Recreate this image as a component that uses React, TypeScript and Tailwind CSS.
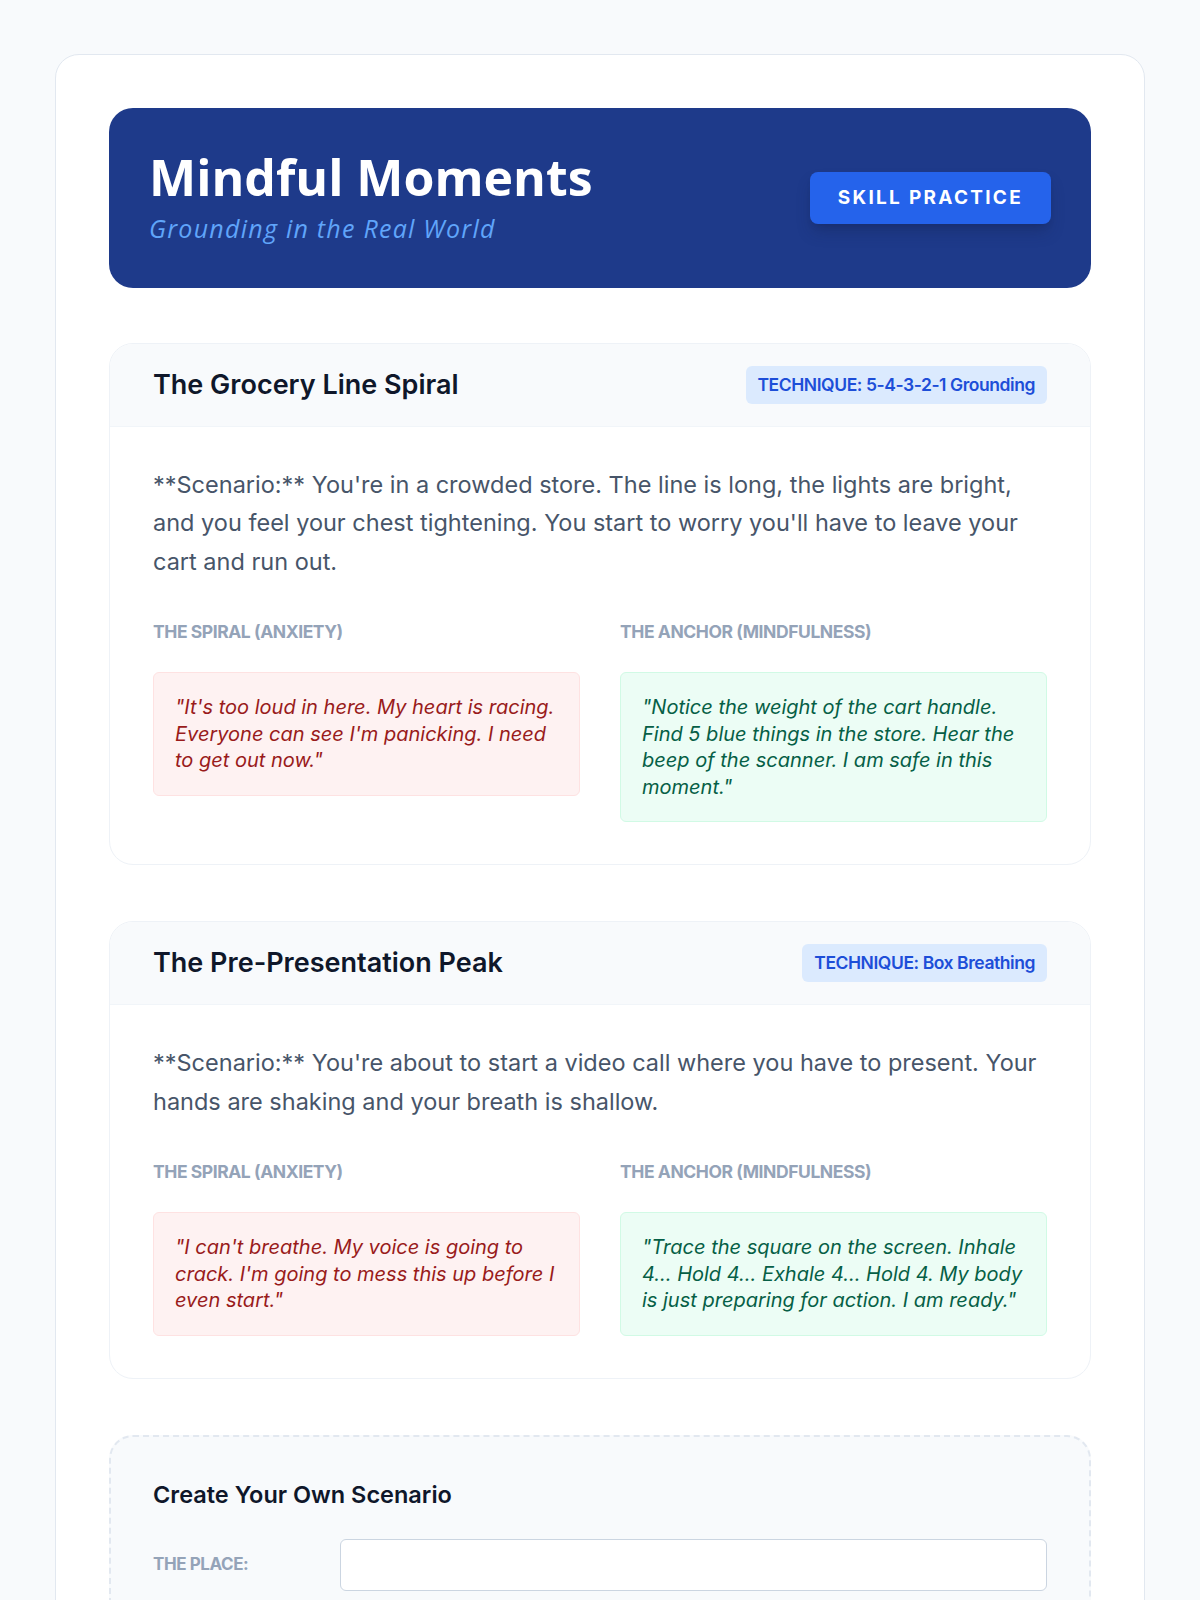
import React from 'react';

type Scenario = {
    title: string;
    technique: string;
    text: string;
    spiral: string;
    anchor: string;
};

const scenarios: Scenario[] = [
    {
        title: 'The Grocery Line Spiral',
        technique: 'TECHNIQUE: 5-4-3-2-1 Grounding',
        text: "**Scenario:** You're in a crowded store. The line is long, the lights are bright, and you feel your chest tightening. You start to worry you'll have to leave your cart and run out.",
        spiral: '"It\'s too loud in here. My heart is racing. Everyone can see I\'m panicking. I need to get out now."',
        anchor: '"Notice the weight of the cart handle. Find 5 blue things in the store. Hear the beep of the scanner. I am safe in this moment."',
    },
    {
        title: 'The Pre-Presentation Peak',
        technique: 'TECHNIQUE: Box Breathing',
        text: "**Scenario:** You're about to start a video call where you have to present. Your hands are shaking and your breath is shallow.",
        spiral: '"I can\'t breathe. My voice is going to crack. I\'m going to mess this up before I even start."',
        anchor: '"Trace the square on the screen. Inhale 4... Hold 4... Exhale 4... Hold 4. My body is just preparing for action. I am ready."',
    },
];

const ScenarioCard = ({ s }: { s: Scenario }) => (
    <div className="rounded-3xl border border-[#eef2f7] bg-white overflow-hidden">
        {/* Card header */}
        <div className="flex items-center justify-between bg-[#f8fafc] border-b border-[#f1f5f9] px-[43px] h-[83px]">
            <h2 className="text-[27px] font-semibold text-[#0f172a]">{s.title}</h2>
            <span className="rounded-md bg-[#dbeafe] px-3 py-[7px] text-[17.5px] leading-6 font-semibold text-[#1d4ed8] tracking-tight">
                {s.technique}
            </span>
        </div>

        {/* Card body */}
        <div className="px-[43px] pt-[39px] pb-[42px]">
            <p className="text-[23.5px] leading-[38.4px] text-[#475569]">{s.text}</p>

            <div className="mt-[39px] grid grid-cols-2 gap-10">
                <div>
                    <p className="text-[17.5px] leading-6 font-bold uppercase text-[#94a3b8] tracking-tight">The Spiral (Anxiety)</p>
                    <div className="mt-7 rounded-md border border-[#fee2e2] bg-[#fef2f2] p-[21px] text-[20px] leading-[26.5px] italic text-[#991b1b]">
                        {s.spiral}
                    </div>
                </div>
                <div>
                    <p className="text-[17.5px] leading-6 font-bold uppercase text-[#94a3b8] tracking-tight">The Anchor (Mindfulness)</p>
                    <div className="mt-7 rounded-md border border-[#d1fae5] bg-[#ecfdf5] p-[21px] text-[20px] leading-[26.5px] italic text-[#065f46]">
                        {s.anchor}
                    </div>
                </div>
            </div>
        </div>
    </div>
);

export default function App() {
    return (
        <div className="min-h-screen bg-[#f8fafc] px-[55px] pt-[54px]" style={{ fontFamily: 'Inter, "Noto Sans", sans-serif' }}>
            <div className="rounded-3xl border border-[#e2e8f0] bg-white p-[53px] pb-20">
                {/* Banner */}
                <div className="flex items-center justify-between rounded-3xl bg-[#1e3a8a] px-10 h-[180px]">
                    <div className="pb-1">
                        <h1 className="text-[50px] leading-[56px] font-bold text-white" style={{ fontFamily: '"Open Sans", sans-serif' }}>
                            Mindful Moments
                        </h1>
                        <p className="mt-[7px] text-[25px] leading-8 italic tracking-[0.05em] text-[#60a5fa]" style={{ fontFamily: '"Open Sans", sans-serif' }}>
                            Grounding in the Real World
                        </p>
                    </div>
                    <div className="rounded-lg bg-[#2563eb] px-7 h-[52px] flex items-center text-[19px] font-bold tracking-[0.12em] text-white shadow-lg shadow-[#172554]/40">
                        SKILL PRACTICE
                    </div>
                </div>

                <div className="mt-[55px] flex flex-col gap-14">
                    {scenarios.map(s => (
                        <ScenarioCard key={s.title} s={s} />
                    ))}

                    {/* Build your own */}
                    <div className="rounded-3xl border-2 border-dashed border-[#e2e8f0] bg-[#f8fafc] px-[42px] pt-[44px] pb-12">
                        <h3 className="text-[23.5px] leading-7 font-semibold text-[#0f172a]">Create Your Own Scenario</h3>
                        <div className="mt-[30px] grid grid-cols-[163px_1fr] gap-6 items-center">
                            <label className="text-[17px] font-bold uppercase text-[#94a3b8] tracking-tight">The Place:</label>
                            <input className="h-[52px] rounded-md border border-[#cbd5e1] bg-white px-4 outline-none" />
                        </div>
                        <div className="mt-4 grid grid-cols-[163px_1fr] gap-6 items-center">
                            <label className="text-[17px] font-bold uppercase text-[#94a3b8] tracking-tight">The Feeling:</label>
                            <input className="h-[52px] rounded-md border border-[#cbd5e1] bg-white px-4 outline-none" />
                        </div>
                    </div>
                </div>
            </div>
        </div>
    );
}
